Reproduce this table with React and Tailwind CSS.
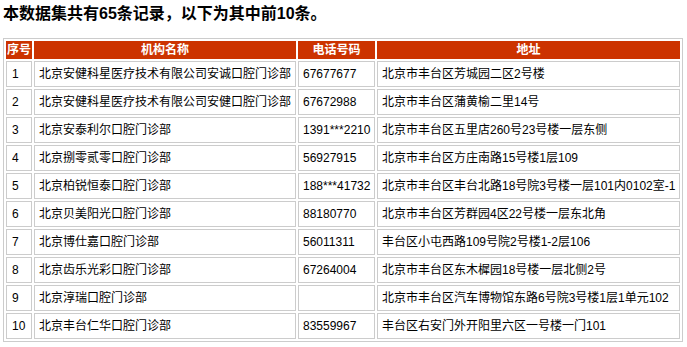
export default function App() {
  const rows = [
    ["1", "北京安健科星医疗技术有限公司安诚口腔门诊部", "67677677", "北京市丰台区芳城园二区2号楼"],
    ["2", "北京安健科星医疗技术有限公司安健口腔门诊部", "67672988", "北京市丰台区蒲黄榆二里14号"],
    ["3", "北京安泰利尔口腔门诊部", "1391***2210", "北京市丰台区五里店260号23号楼一层东侧"],
    ["4", "北京捌零贰零口腔门诊部", "56927915", "北京市丰台区方庄南路15号楼1层109"],
    ["5", "北京柏锐恒泰口腔门诊部", "188***41732", "北京市丰台区丰台北路18号院3号楼一层101内0102室-1"],
    ["6", "北京贝美阳光口腔门诊部", "88180770", "北京市丰台区芳群园4区22号楼一层东北角"],
    ["7", "北京博仕嘉口腔门诊部", "56011311", "丰台区小屯西路109号院2号楼1-2层106"],
    ["8", "北京齿乐光彩口腔门诊部", "67264004", "北京市丰台区东木樨园18号楼一层北侧2号"],
    ["9", "北京淳瑞口腔门诊部", "", "北京市丰台区汽车博物馆东路6号院3号楼1层1单元102"],
    ["10", "北京丰台仁华口腔门诊部", "83559967", "丰台区右安门外开阳里六区一号楼一门101"],
  ];
  const font = { fontFamily: '"Liberation Sans", "Noto Sans CJK SC", sans-serif' };
  return (
    <div className="bg-white w-[687px] h-[347px] pl-[3px] text-black" style={font}>
      <div className="pt-[3px] text-[16px] leading-[22px] font-bold h-[38px]">
        本数据集共有65条记录，以下为其中前10条。
      </div>
      <table className="w-[680px] table-fixed border-separate border-spacing-[2px] border border-[#cccccc] text-[12px]">
        <thead>
          <tr>
            <th className="w-[26px] h-[18px] p-0 bg-[#cc3300] text-white font-bold leading-[16px] border border-[#cc3300]">序号</th>
            <th className="w-[262px] h-[18px] p-0 bg-[#cc3300] text-white font-bold leading-[16px] border border-[#cc3300]">机构名称</th>
            <th className="w-[77px] h-[18px] p-0 bg-[#cc3300] text-white font-bold leading-[16px] border border-[#cc3300]">电话号码</th>
            <th className="h-[18px] p-0 bg-[#cc3300] text-white font-bold leading-[16px] border border-[#cc3300]">地址</th>
          </tr>
        </thead>
        <tbody>
          {rows.map((r) => (
            <tr key={r[0]}>
              <td className="h-[26px] py-0 pl-[5px] pr-0 border border-[#cccccc] leading-[16px] whitespace-nowrap overflow-hidden">{r[0]}</td>
              <td className="h-[26px] py-0 pl-[4px] pr-0 border border-[#cccccc] leading-[16px] whitespace-nowrap overflow-hidden">{r[1]}</td>
              <td className="h-[26px] py-0 pl-[4px] pr-0 border border-[#cccccc] leading-[16px] whitespace-nowrap overflow-hidden">{r[2]}</td>
              <td className="h-[26px] py-0 pl-[4px] pr-0 border border-[#cccccc] leading-[16px] whitespace-nowrap overflow-hidden">{r[3]}</td>
            </tr>
          ))}
        </tbody>
      </table>
    </div>
  );
}
